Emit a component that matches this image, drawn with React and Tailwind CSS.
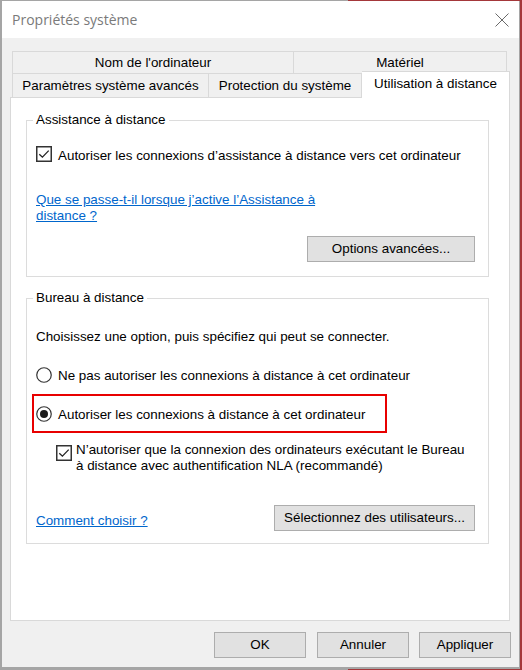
function CheckBox() {
  return (
    <svg width="16" height="16" viewBox="0 0 16 16" className="shrink-0">
      <rect x="0.75" y="0.75" width="14.5" height="14.5" fill="#ffffff" stroke="#333333" strokeWidth="1.5" />
      <polyline points="3.3,8.2 6.4,11.2 12.7,4.6" fill="none" stroke="#222222" strokeWidth="1.3" />
    </svg>
  );
}

function Radio({ checked }) {
  return (
    <svg width="16" height="16" viewBox="0 0 16 16" className="shrink-0">
      <circle cx="8" cy="8" r="7.25" fill="#ffffff" stroke="#333333" strokeWidth="1.2" />
      {checked && <circle cx="8" cy="8" r="4" fill="#1a1a1a" />}
    </svg>
  );
}

function Button({ children, w, extra = "" }) {
  return (
    <div className={`${w} ${extra} h-[26px] shrink-0 flex items-center justify-center bg-[#e1e1e1] border border-[#adadad] text-black`}>
      {children}
    </div>
  );
}

function GroupTitle({ children }) {
  return (
    <div className="flex h-[16px]">
      <div className="w-[7px] h-[8px] self-end border-l border-t border-[#dcdcdc]" />
      <div className="px-[3px] leading-[16px] whitespace-nowrap">{children}</div>
      <div className="flex-1 h-[8px] self-end border-r border-t border-[#dcdcdc]" />
    </div>
  );
}

export default function App() {
  return (
    <div className="relative w-[522px] h-[670px] bg-[#f0f0f0] overflow-hidden font-['Liberation_Sans',Arial,sans-serif] text-[13.4px] text-black">
      <div className="w-[520px] h-[670px] flex flex-col border-l-2 border-t border-r border-b-[3px] border-[#a5a5a5] bg-[#f0f0f0]">
        {/* Title bar */}
        <div className="h-[37px] shrink-0 bg-white flex items-center justify-between pl-[10px] pr-[10px]">
          <span className="font-['Open_Sans',sans-serif] text-[14px] text-[#7a7a7a] leading-[20px]">Propriétés système</span>
          <svg width="14" height="14" viewBox="0 0 14 14">
            <line x1="0.5" y1="0.5" x2="13.5" y2="13.5" stroke="#6a6a6a" strokeWidth="1" />
            <line x1="13.5" y1="0.5" x2="0.5" y2="13.5" stroke="#6a6a6a" strokeWidth="1" />
          </svg>
        </div>

        {/* Tabs */}
        <div className="ml-[8px] w-[500px] mt-[13px]">
          <div className="ml-[2px] flex h-[22px]">
            <div className="w-[282px] border-l border-t border-r border-[#d9d9d9] flex items-center justify-center leading-[16px]">
              Nom de l'ordinateur
            </div>
            <div className="w-[213px] border-t border-r border-[#d9d9d9] flex items-center justify-center leading-[16px]">
              Matériel
            </div>
          </div>
          <div className="ml-[2px] flex h-[24px] items-end">
            <div className="w-[197px] h-[24px] border-l border-t border-r border-[#d9d9d9] flex items-center justify-center leading-[16px]">
              Paramètres système avancés
            </div>
            <div className="w-[153px] h-[24px] border-t border-r border-[#d9d9d9] flex items-center justify-center leading-[16px]">
              Protection du système
            </div>
            <div className="relative z-10 w-[148px] h-[27px] -mb-[1px] bg-white border-t border-r border-[#d9d9d9] flex items-start justify-center pt-[4px] leading-[16px]">
              Utilisation à distance
            </div>
          </div>

          {/* Panel */}
          <div className="h-[524px] bg-white border border-[#d9d9d9] pl-[15px] pt-[14px]">
            {/* Group 1 */}
            <div className="w-[463px]">
              <GroupTitle>Assistance à distance</GroupTitle>
              <div className="border-l border-r border-b border-[#dcdcdc] pl-[9px] pr-[13px] pt-[18px] pb-[14px] flex flex-col">
                <div className="flex items-center gap-[6px] h-[16px]">
                  <CheckBox />
                  <span className="leading-[16px] pt-[3px]">Autoriser les connexions d’assistance à distance vers cet ordinateur</span>
                </div>
                <div className="mt-[30px] leading-[16px] text-[#0066cc] underline">
                  Que se passe-t-il lorsque j’active l’Assistance à
                  <br />
                  distance ?
                </div>
                <div className="mt-[12px] self-end">
                  <Button w="w-[168px]">Options avancées...</Button>
                </div>
              </div>
            </div>

            {/* Group 2 */}
            <div className="w-[463px] mt-[13px]">
              <GroupTitle>Bureau à distance</GroupTitle>
              <div className="border-l border-r border-b border-[#dcdcdc] pl-[9px] pr-[13px] pt-[23px] pb-[12px] flex flex-col">
                <div className="leading-[16px]">Choisissez une option, puis spécifiez qui peut se connecter.</div>
                <div className="mt-[22px] flex items-center gap-[6px] h-[16px]">
                  <Radio checked={false} />
                  <span className="leading-[16px] pt-[2px]">Ne pas autoriser les connexions à distance à cet ordinateur</span>
                </div>
                <div className="mt-[11px] -ml-[4px] w-[355px] border-2 border-[#e80000] pl-[2px] pt-[10px] pb-[9px]">
                  <div className="flex items-center gap-[6px] h-[16px]">
                    <Radio checked={true} />
                    <span className="leading-[16px] pt-[2px]">Autoriser les connexions à distance à cet ordinateur</span>
                  </div>
                </div>
                <div className="mt-[9px] ml-[20px] flex items-start gap-[4px]">
                  <div className="mt-[3px]">
                    <CheckBox />
                  </div>
                  <div className="leading-[16px]">
                    N’autoriser que la connexion des ordinateurs exécutant le Bureau
                    <br />
                    à distance avec authentification NLA (recommandé)
                  </div>
                </div>
                <div className="mt-[31px] flex items-center justify-between">
                  <span className="leading-[16px] pt-[6px] text-[#0066cc] underline">Comment choisir ?</span>
                  <Button w="w-[201px]">Sélectionnez des utilisateurs...</Button>
                </div>
              </div>
            </div>
          </div>
        </div>

        {/* Bottom buttons */}
        <div className="mt-[11px] flex justify-end pr-[8px]">
          <Button w="w-[92px]" extra="mr-[11px]">OK</Button>
          <Button w="w-[92px]" extra="mr-[10px]">Annuler</Button>
          <Button w="w-[92px]">Appliquer</Button>
        </div>
      </div>

      {/* Neighbouring window frame (red accent) */}
      <div className="absolute top-0 right-0 w-[2px] h-[670px] bg-[#a4373a]" />
      <div className="absolute top-0 left-[348px] right-0 h-[1px] bg-[#a4373a]" />
      <div className="absolute bottom-0 left-[348px] right-0 h-[1px] bg-[#a4373a]" />
    </div>
  );
}
